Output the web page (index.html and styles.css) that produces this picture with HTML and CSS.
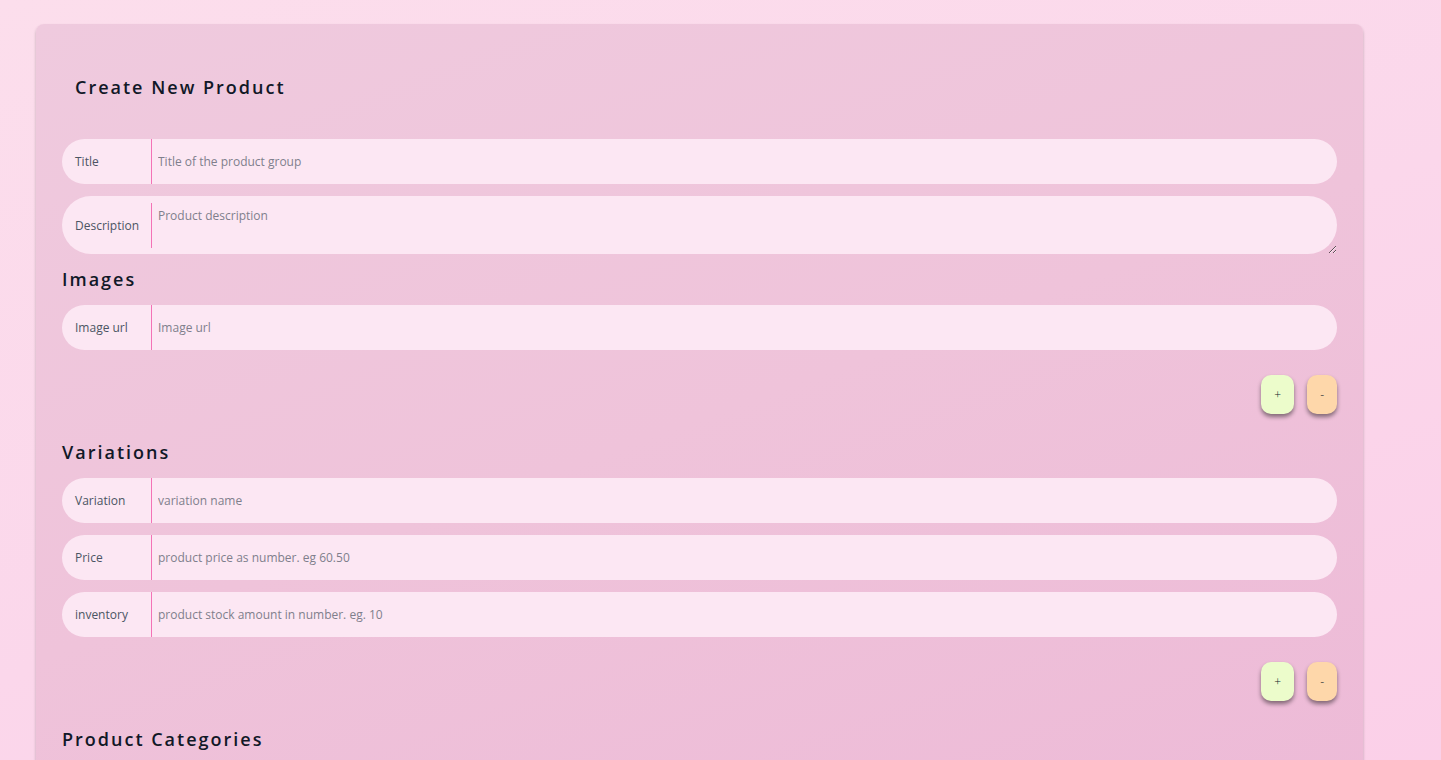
FILE: index.html
```html
<!DOCTYPE html>
<html lang="en">
<head>
  <meta charset="utf-8">
  <meta name="viewport" content="width=device-width, initial-scale=1">
  <title>Create New Product</title>
  <link rel="stylesheet" href="styles.css">
</head>
<body>
  <main class="page">
    <form class="card">
      <h1 class="heading card-title">Create New Product</h1>
      <div class="fields">
        <div class="field">
          <label class="field-label" for="title">Title</label>
          <input class="field-control" id="title" type="text" placeholder="Title of the product group">
        </div>
        <div class="field">
          <label class="field-label" for="description">Description</label>
          <textarea class="field-control field-area" id="description" placeholder="Product description"></textarea>
        </div>
      </div>

      <h2 class="heading section-title">Images</h2>
      <div class="fields">
        <div class="field">
          <label class="field-label" for="image">Image url</label>
          <input class="field-control" id="image" type="text" placeholder="Image url">
        </div>
      </div>
      <div class="actions">
        <button class="btn btn-add" type="button">+</button>
        <button class="btn btn-remove" type="button">-</button>
      </div>

      <h2 class="heading section-title">Variations</h2>
      <div class="fields">
        <div class="field">
          <label class="field-label" for="variation">Variation</label>
          <input class="field-control" id="variation" type="text" placeholder="variation name">
        </div>
        <div class="field">
          <label class="field-label" for="price">Price</label>
          <input class="field-control" id="price" type="text" placeholder="product price as number. eg 60.50">
        </div>
        <div class="field">
          <label class="field-label" for="inventory">inventory</label>
          <input class="field-control" id="inventory" type="text" placeholder="product stock amount in number. eg. 10">
        </div>
      </div>
      <div class="actions">
        <button class="btn btn-add" type="button">+</button>
        <button class="btn btn-remove" type="button">-</button>
      </div>

      <h2 class="heading section-title">Product Categories</h2>
    </form>
  </main>
</body>
</html>
```

FILE: styles.css
```css
*,
*::before,
*::after {
  box-sizing: border-box;
}

body {
  margin: 0;
  font-family: "Open Sans", "Noto Sans", sans-serif;
  font-size: 12px;
  font-weight: 400;
  color: #4b5563;
}

.page {
  min-height: 100vh;
  padding: 24px 78px 24px 36px;
  background: linear-gradient(160deg, #fcdeec, #fbd7eb 50%, #fbcfe8);
}

.card {
  padding: 47px 26px 46px;
  border-radius: 8px;
  background: linear-gradient(160deg, #efcade, #efc3da 50%, #edbad7);
  box-shadow: 0 2px 3px rgba(0, 0, 0, 0.25);
}

.heading {
  margin: 0;
  font-size: 18px;
  font-weight: 600;
  line-height: 32px;
  letter-spacing: 2px;
  color: #111827;
}

.card-title {
  padding: 0 13px;
  margin-bottom: 36px;
}

.section-title {
  margin: 9px 0 10px;
}

.fields {
  display: grid;
  gap: 12px;
}

.field {
  display: flex;
  align-items: center;
  border-radius: 32px;
  background: #fce7f3;
}

.field-label {
  flex: none;
  width: 90px;
  padding-left: 13px;
  border-right: 1px solid #f472b6;
  line-height: 45px;
}

.field-control {
  flex: 1;
  min-width: 0;
  height: 45px;
  padding: 0 26px 0 6px;
  border: 0;
  border-radius: 0 32px 32px 0;
  outline: 0;
  background: transparent;
  font: inherit;
  color: inherit;
}

.field-control::placeholder {
  color: #7f7f8c;
  opacity: 1;
}

.field-area {
  height: 58px;
  padding-top: 11px;
  border-radius: 0;
  resize: vertical;
}

.actions {
  display: flex;
  justify-content: flex-end;
  gap: 13px;
  padding: 25px 0 13px;
}

.btn {
  padding: 0 13px;
  border: 0;
  border-radius: 10px;
  box-shadow: 0 3px 4px rgba(0, 0, 0, 0.45);
  font: inherit;
  font-weight: 300;
  line-height: 39px;
  color: #111827;
}

.btn-add {
  background: #ecfccb;
}

.btn-remove {
  background: #fed7aa;
}
```
